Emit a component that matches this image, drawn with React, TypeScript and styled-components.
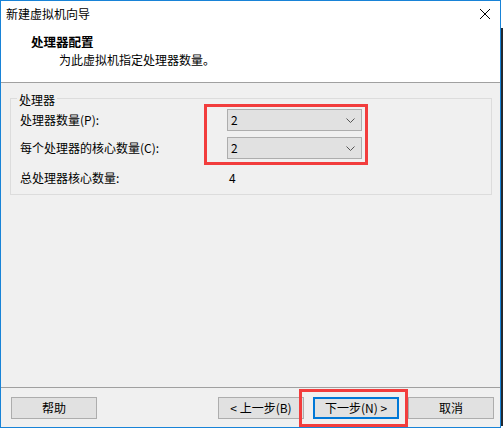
import React from "react";
import styled, { createGlobalStyle } from "styled-components";

const Global = createGlobalStyle`
  html, body { margin: 0; padding: 0; background: #ffffff; }
  body {
    font-family: "Noto Sans CJK SC", "Microsoft YaHei UI", sans-serif;
    font-size: 12px;
    color: #000;
  }
  * { box-sizing: border-box; }
`;

const Page = styled.div`
  display: flex;
  align-items: flex-start;
  width: 503px;
  height: 430px;
`;

const Window = styled.div`
  width: 501px;
  height: 428px;
  border: 1px solid #1883d7;
  display: flex;
  flex-direction: column;
  background: #f0f0f0;
`;

const Shadow = styled.div`
  width: 2px;
  height: 398px;
  margin-top: 28px;
  background: #24292e;
`;

const TitleBar = styled.div`
  height: 25px;
  display: flex;
  align-items: center;
  justify-content: space-between;
  padding: 0 10px 0 5px;
  background: #fff;
  line-height: 16px;
`;

const Header = styled.div`
  height: 57px;
  background: #fff;
  border-bottom: 1px solid #a0a0a0;
  padding: 8px 0 0 30px;
  line-height: 16px;
  display: flex;
  flex-direction: column;
  gap: 2px;
`;

const HeaderTitle = styled.div`
  font-weight: bold;
  font-size: 12.5px;
`;

const HeaderSub = styled.div`
  padding-left: 28px;
`;

const Main = styled.div`
  flex: 1;
  padding: 5px 8px 0 9px;
`;

const Group = styled.fieldset`
  margin: 0;
  border: 1px solid #dcdcdc;
  padding: 1px 6px 3px 6px;
`;

const Legend = styled.legend`
  padding: 4px 2px 0 2px;
  line-height: 16px;
`;

const Grid = styled.div`
  display: grid;
  grid-template-columns: 207px 135px;
  grid-template-rows: 22px 22px 26px;
  row-gap: 6px;
  padding-left: 3px;
  line-height: 16px;
`;

const Label = styled.div<{ $row: number }>`
  grid-column: 1;
  grid-row: ${(p) => p.$row};
  align-self: center;
`;

const Value = styled.div`
  grid-column: 2;
  grid-row: 3;
  align-self: center;
  padding-left: 2px;
`;

const Highlight = styled.div<{ $t: number; $r: number; $b: number; $l: number }>`
  position: relative;
  &::after {
    content: "";
    position: absolute;
    top: ${(p) => -p.$t}px;
    right: ${(p) => -p.$r}px;
    bottom: ${(p) => -p.$b}px;
    left: ${(p) => -p.$l}px;
    border: 3px solid #f23d3d;
    pointer-events: none;
  }
`;

const ComboColumn = styled(Highlight)`
  grid-column: 2;
  grid-row: 1 / span 2;
  display: flex;
  flex-direction: column;
  gap: 6px;
`;

const Combo = styled.div`
  height: 22px;
  border: 1px solid #adadad;
  background: #e1e1e1;
  display: flex;
  align-items: center;
  justify-content: space-between;
  padding: 0 6px 0 3px;
`;

const Footer = styled.div`
  height: 40px;
  border-top: 1px solid #a0a0a0;
  padding: 9px 6px 0 10px;
  display: flex;
  align-items: flex-start;
`;

const NavGroup = styled.div`
  margin-left: auto;
  display: flex;
  gap: 9px;
`;

const Button = styled.div<{ $default?: boolean }>`
  width: 86px;
  height: 22px;
  border: ${(p) => (p.$default ? "2px solid #0078d7" : "1px solid #adadad")};
  background: #e1e1e1;
  display: flex;
  align-items: center;
  justify-content: center;
  line-height: 16px;
`;

const Chevron = () => (
  <svg width="9" height="5" viewBox="0 0 9 5">
    <path d="M0.5 0.5 L4.5 4.5 L8.5 0.5" fill="none" stroke="#555" strokeWidth="1" />
  </svg>
);

const CloseIcon = () => (
  <svg width="10" height="10" viewBox="0 0 10 10">
    <path d="M0 0 L10 10 M10 0 L0 10" stroke="#000" strokeWidth="1" />
  </svg>
);

export default function App() {
  return (
    <>
      <Global />
      <Page>
        <Window>
          <TitleBar>
            <span>新建虚拟机向导</span>
            <CloseIcon />
          </TitleBar>
          <Header>
            <HeaderTitle>处理器配置</HeaderTitle>
            <HeaderSub>为此虚拟机指定处理器数量。</HeaderSub>
          </Header>
          <Main>
            <Group>
              <Legend>处理器</Legend>
              <Grid>
                <Label $row={1}>处理器数量(P):</Label>
                <Label $row={2}>每个处理器的核心数量(C):</Label>
                <Label $row={3}>总处理器核心数量:</Label>
                <ComboColumn $t={5} $r={6} $b={6} $l={23}>
                  <Combo>
                    <span>2</span>
                    <Chevron />
                  </Combo>
                  <Combo>
                    <span>2</span>
                    <Chevron />
                  </Combo>
                </ComboColumn>
                <Value>4</Value>
              </Grid>
            </Group>
          </Main>
          <Footer>
            <Button>帮助</Button>
            <NavGroup>
              <Button>&lt; 上一步(B)</Button>
              <Highlight $t={8} $r={9} $b={8} $l={14}>
                <Button $default>下一步(N) &gt;</Button>
              </Highlight>
              <Button>取消</Button>
            </NavGroup>
          </Footer>
        </Window>
        <Shadow />
      </Page>
    </>
  );
}
